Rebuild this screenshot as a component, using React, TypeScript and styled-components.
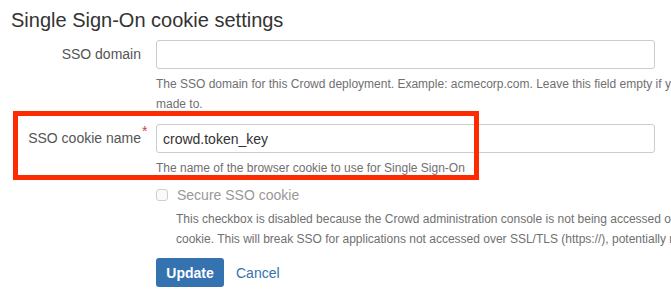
import styled, { createGlobalStyle } from 'styled-components'

const GlobalStyle = createGlobalStyle`
    body {
        margin: 0;
        overflow: hidden;
        background: #ffffff;
        font-family: "Liberation Sans", Arial, Helvetica, sans-serif;
        color: #333333;
    }
`

export default function App() {
    return (
        <Page>
            <GlobalStyle />
            <Title>Single Sign-On cookie settings</Title>
            <FieldRow>
                <Label>SSO domain</Label>
                <Input type="text" defaultValue="" />
                <Help>
                    The SSO domain for this Crowd deployment. Example: acmecorp.com. Leave this field empty if you want the cookie to be set for the domain the request was<br />
                    made to.
                </Help>
            </FieldRow>
            <FieldRow $gap={10}>
                <Label>
                    SSO cookie name<Required>*</Required>
                </Label>
                <Input type="text" defaultValue="crowd.token_key" />
                <Help>The name of the browser cookie to use for Single Sign-On</Help>
            </FieldRow>
            <CheckRow>
                <CheckBox type="checkbox" disabled />
                <CheckLabel>Secure SSO cookie</CheckLabel>
            </CheckRow>
            <CheckHelp>
                This checkbox is disabled because the Crowd administration console is not being accessed over SSL/TLS. Enabling it would prevent Crowd from setting the SSO<br />
                cookie. This will break SSO for applications not accessed over SSL/TLS (https://), potentially making them inaccessible.
            </CheckHelp>
            <Buttons>
                <PrimaryButton>Update</PrimaryButton>
                <CancelLink href="#">Cancel</CancelLink>
            </Buttons>
            <Highlight />
        </Page>
    )
}

const Page = styled.div`
    position: relative;
    width: 671px;
    height: 302px;
    padding: 8px 0 0 11px;
    box-sizing: border-box;
    overflow: hidden;
`

const Title = styled.h2`
    margin: 0 0 8px;
    font-size: 20px;
    line-height: 24px;
    font-weight: normal;
    color: #333333;
`

const FieldRow = styled.div<{ $gap?: number }>`
    display: grid;
    grid-template-columns: 145px 499px;
    margin-top: ${p => p.$gap ?? 0}px;
`

const Label = styled.label`
    position: relative;
    justify-self: end;
    padding-right: 15px;
    height: 29px;
    line-height: 29px;
    font-size: 14px;
    color: #555555;
    white-space: nowrap;
`

const Required = styled.span`
    position: absolute;
    top: -7px;
    left: calc(100% - 14px);
    color: #d04437;
    font-size: 14px;
`

const Input = styled.input`
    box-sizing: border-box;
    width: 499px;
    height: 29px;
    padding: 0 6px;
    border: 1px solid #cccccc;
    border-radius: 3px;
    font-family: inherit;
    font-size: 14px;
    color: #333333;
    outline: none;
`

const Help = styled.div`
    grid-column: 2;
    margin-top: 5px;
    font-size: 12px;
    line-height: 20px;
    color: #707070;
    white-space: nowrap;
`

const CheckRow = styled.div`
    display: flex;
    align-items: center;
    gap: 9px;
    height: 20px;
    margin: 7px 0 0 145px;
`

const CheckBox = styled.input`
    appearance: none;
    margin: 0;
    width: 12px;
    height: 12px;
    box-sizing: border-box;
    border: 1px solid #cfcfcf;
    border-radius: 3px;
    background: #fafafa;
`

const CheckLabel = styled.span`
    font-size: 14px;
    color: #999999;
`

const CheckHelp = styled.div`
    margin: 4px 0 0 165px;
    font-size: 12px;
    line-height: 20px;
    color: #707070;
    white-space: nowrap;
`

const Buttons = styled.div`
    display: flex;
    align-items: center;
    gap: 12px;
    margin: 9px 0 0 145px;
`

const PrimaryButton = styled.button`
    height: 29px;
    width: 68px;
    padding: 0;
    border: none;
    border-radius: 3px;
    background: #3572b0;
    color: #ffffff;
    font-family: inherit;
    font-size: 14px;
    font-weight: bold;
`

const CancelLink = styled.a`
    font-size: 14px;
    color: #3572b0;
    text-decoration: none;
`

const Highlight = styled.div`
    position: absolute;
    left: 13px;
    top: 111px;
    width: 466px;
    height: 69px;
    box-sizing: border-box;
    border: 5px solid #fe2a00;
    pointer-events: none;
`
